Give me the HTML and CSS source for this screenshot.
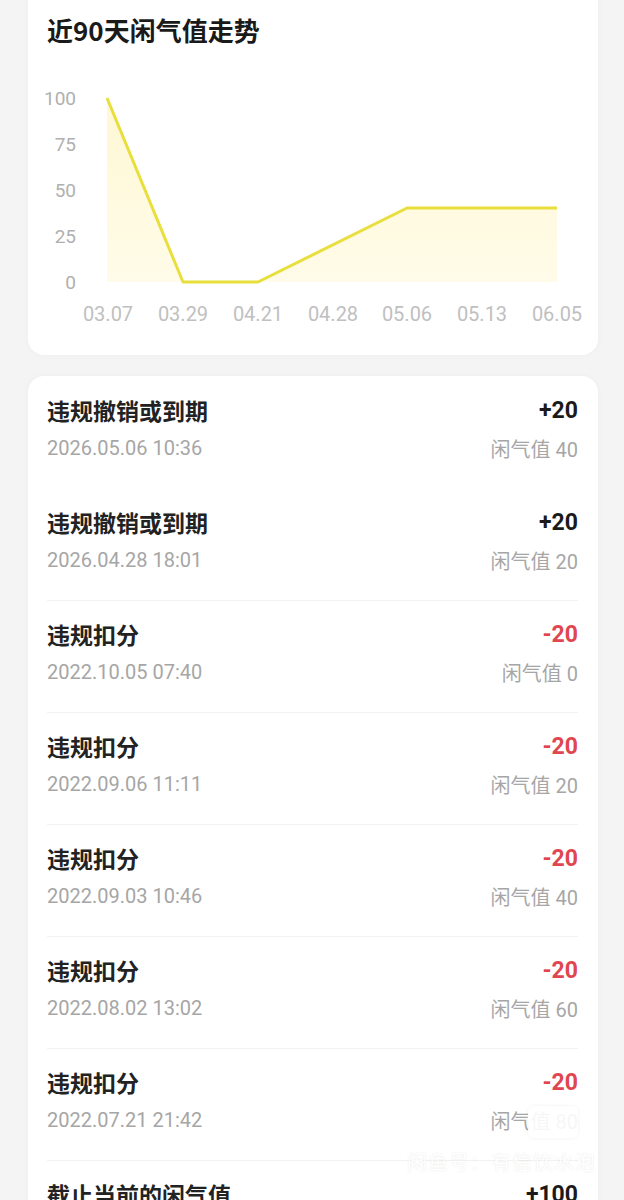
FILE: index.html
```html
<!DOCTYPE html>
<html>
<head>
    <meta charset="utf-8">
    <title>闲气值记录</title>
    <link rel="stylesheet" href="styles.css">
</head>
<body>
    <div class="page">
        <!-- 走势卡片 -->
        <div class="card trend-card">
            <h2 class="trend-title">近90天闲气值走势</h2>
            <svg class="chart" width="570" height="250" viewBox="28 80 570 250">
                <defs>
                    <linearGradient id="area" x1="0" y1="0" x2="0" y2="1">
                        <stop offset="0" stop-color="#fff6c8" stop-opacity="0.75"/>
                        <stop offset="1" stop-color="#fffbe6" stop-opacity="0.9"/>
                    </linearGradient>
                </defs>
                <g class="y-labels">
                    <text x="76" y="98">100</text>
                    <text x="76" y="144">75</text>
                    <text x="76" y="190">50</text>
                    <text x="76" y="236">25</text>
                    <text x="76" y="282">0</text>
                </g>
                <polygon points="107,98 183,282 258,282 407,208 557,208 557,282 107,282" fill="url(#area)"/>
                <polyline points="107,98 183,282 258,282 407,208 557,208" fill="none" stroke="#e9df3c" stroke-width="3" stroke-linejoin="round"/>
                <g class="x-labels">
                    <text x="108" y="314">03.07</text>
                    <text x="183" y="314">03.29</text>
                    <text x="258" y="314">04.21</text>
                    <text x="333" y="314">04.28</text>
                    <text x="407" y="314">05.06</text>
                    <text x="482" y="314">05.13</text>
                    <text x="557" y="314">06.05</text>
                </g>
            </svg>
        </div>

        <!-- 明细列表 -->
        <div class="card record-card">
            <div class="record no-line">
                <div class="record-row">
                    <span class="record-name">违规撤销或到期</span>
                    <span class="record-amount">+20</span>
                </div>
                <div class="record-row">
                    <span class="record-time">2026.05.06 10:36</span>
                    <span class="record-value">闲气值 40</span>
                </div>
            </div>
            <div class="record no-line">
                <div class="record-row">
                    <span class="record-name">违规撤销或到期</span>
                    <span class="record-amount">+20</span>
                </div>
                <div class="record-row">
                    <span class="record-time">2026.04.28 18:01</span>
                    <span class="record-value">闲气值 20</span>
                </div>
            </div>
            <div class="record">
                <div class="record-row">
                    <span class="record-name">违规扣分</span>
                    <span class="record-amount minus">-20</span>
                </div>
                <div class="record-row">
                    <span class="record-time">2022.10.05 07:40</span>
                    <span class="record-value">闲气值 0</span>
                </div>
            </div>
            <div class="record">
                <div class="record-row">
                    <span class="record-name">违规扣分</span>
                    <span class="record-amount minus">-20</span>
                </div>
                <div class="record-row">
                    <span class="record-time">2022.09.06 11:11</span>
                    <span class="record-value">闲气值 20</span>
                </div>
            </div>
            <div class="record">
                <div class="record-row">
                    <span class="record-name">违规扣分</span>
                    <span class="record-amount minus">-20</span>
                </div>
                <div class="record-row">
                    <span class="record-time">2022.09.03 10:46</span>
                    <span class="record-value">闲气值 40</span>
                </div>
            </div>
            <div class="record">
                <div class="record-row">
                    <span class="record-name">违规扣分</span>
                    <span class="record-amount minus">-20</span>
                </div>
                <div class="record-row">
                    <span class="record-time">2022.08.02 13:02</span>
                    <span class="record-value">闲气值 60</span>
                </div>
            </div>
            <div class="record">
                <div class="record-row">
                    <span class="record-name">违规扣分</span>
                    <span class="record-amount minus">-20</span>
                </div>
                <div class="record-row">
                    <span class="record-time">2022.07.21 21:42</span>
                    <span class="record-value">闲气值 80</span>
                </div>
                <div class="mark-box"></div>
            </div>
            <div class="record">
                <div class="record-row">
                    <span class="record-name">截止当前的闲气值</span>
                    <span class="record-amount">+100</span>
                </div>
                <div class="record-row">
                    <span class="record-time">&nbsp;</span>
                </div>
                <div class="watermark">闲鱼号：有信饮水泡</div>
            </div>
        </div>
    </div>
</body>
</html>
```

FILE: styles.css
```css
body { margin: 0; background: #f4f4f4; font-family: "Noto Sans CJK SC", sans-serif; overflow: hidden; }
.page { padding: 0 26px 0 28px; }
.card { background: #fff; border-radius: 16px; box-shadow: 0 0 6px rgba(0,0,0,0.03); }

.trend-card { margin-top: -20px; padding: 32px 0 25px; }
.trend-title { margin: 0 0 32px 19px; font-size: 26px; line-height: 36px; font-weight: 700; color: #1a1a1a; }
.chart { display: block; }
.chart text { font-family: Roboto, "Noto Sans", sans-serif; dominant-baseline: central; }
.y-labels text { font-size: 19px; fill: #b0b0b0; text-anchor: end; }
.x-labels text { font-size: 20px; fill: #c0c0c0; text-anchor: middle; }

.record-card { margin-top: 21px; padding: 0 20px 0 19px; }
.record { position: relative; padding: 19px 0 26px; border-top: 1px solid #f2f2f2; }
.record.no-line { border-top: 1px solid transparent; }
.record:first-child { border-top: none; padding-top: 20px; }
.record-row { display: flex; justify-content: space-between; align-items: center; height: 28px; }
.record-row + .record-row { margin-top: 10px; }
.record-name { font-size: 23px; font-weight: 700; color: #222; }
.record-amount { font-family: Roboto, "Noto Sans CJK SC", sans-serif; font-size: 23px; font-weight: 700; color: #1a1a1a; }
.record-amount.minus { color: #e0464f; }
.record-time { font-family: Roboto, "Noto Sans", sans-serif; font-size: 20px; color: #a6a6a6; }
.record-value { font-family: Roboto, "Noto Sans CJK SC", sans-serif; font-size: 20px; color: #a6a6a6; }

/* 截图上的水印 */
.mark-box { position: absolute; right: 0; top: 57px; width: 50px; height: 32px; border-radius: 6px; background: rgba(255,255,255,0.9); box-shadow: 0 0 4px rgba(0,0,0,0.06); }
.watermark { position: absolute; right: -18px; top: -14px; font-size: 20px; color: #fff; opacity: 0.9; text-shadow: 0 0 2px rgba(0,0,0,0.1); letter-spacing: 1px; }
```
